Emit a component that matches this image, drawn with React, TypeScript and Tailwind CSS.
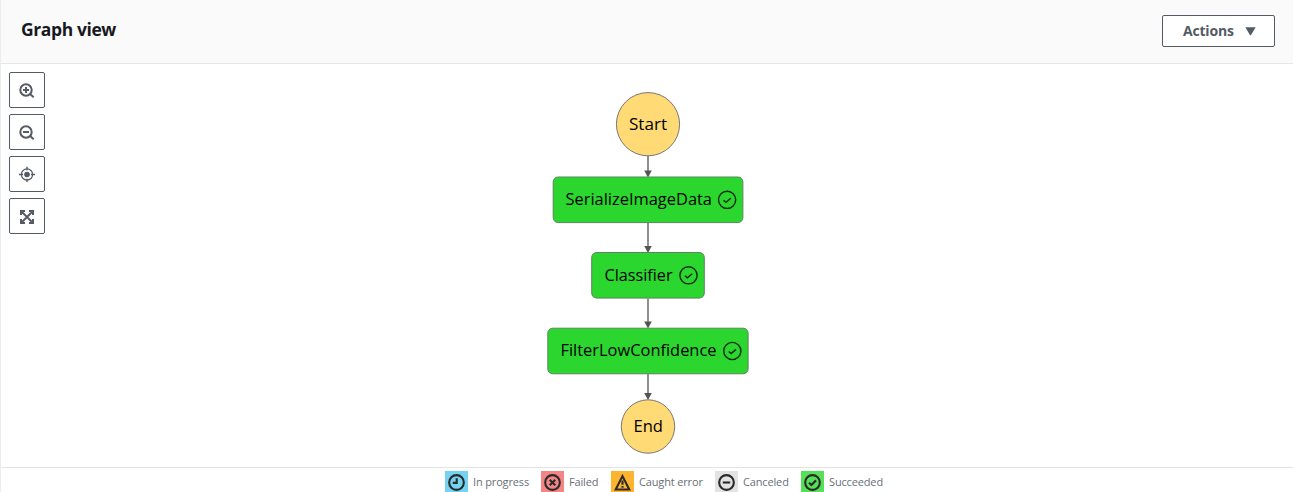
import type { ReactNode } from "react";

function ToolButton({ label, children }: { label: string; children: ReactNode }) {
  return (
    <button
      aria-label={label}
      className="flex h-9 w-9 items-center justify-center rounded-[2px] border border-[#545b64] bg-white text-[#545b64]"
    >
      <svg viewBox="0 0 16 16" className="h-4 w-4" fill="none" stroke="currentColor" strokeWidth="2">
        {children}
      </svg>
    </button>
  );
}

function LegendItem({
  label,
  width,
  color,
  children,
}: {
  label: string;
  width: string;
  color: string;
  children: ReactNode;
}) {
  return (
    <div className={`flex items-start gap-[5px] ${width}`}>
      <span className={`flex h-[22px] w-[23px] shrink-0 items-center pl-[2.5px] ${color}`}>
        <svg viewBox="0 0 16 16" className="h-[17px] w-[17px]" fill="none" stroke="#2b2b2b" strokeWidth="2">
          {children}
        </svg>
      </span>
      <span className="whitespace-nowrap leading-[22px] tracking-[-0.15px]">{label}</span>
    </div>
  );
}

const states = [
  { name: "SerializeImageData", x: 553.2, y: 177, w: 189.7, textX: 565.5, textW: 146.5, base: 205 },
  { name: "Classifier", x: 591.7, y: 252.5, w: 112.6, textX: 604.5, textW: 68, base: 281 },
  { name: "FilterLowConfidence", x: 547.8, y: 328.2, w: 200.3, textX: 560.5, textW: 156, base: 356 },
];

const edges = [
  { from: 156, to: 177.5 },
  { from: 223, to: 253 },
  { from: 298.5, to: 328.5 },
  { from: 374, to: 400 },
];

function Graph() {
  return (
    <svg
      viewBox="540 64 216 403"
      className="h-[403px] w-[216px]"
      fontSize="16"
      fill="#000"
    >
      {edges.map((e) => (
        <g key={e.from}>
          <line x1="648" x2="648" y1={e.from} y2={e.to - 5} stroke="#545454" strokeWidth="1.3" />
          <path d={`M644.2 ${e.to - 7}H651.8L648 ${e.to}Z`} fill="#545454" />
        </g>
      ))}
      <circle cx="648" cy="124.2" r="31.6" fill="#ffda75" stroke="#777" />
      <text x="629" y="130" textLength="38" lengthAdjust="spacingAndGlyphs">Start</text>
      {states.map((s) => (
        <g key={s.name}>
          <rect x={s.x} y={s.y} width={s.w} height="45.6" rx="5" fill="#2bd62e" stroke="#5b855c" />
          <text x={s.textX} y={s.base} textLength={s.textW} lengthAdjust="spacingAndGlyphs">
            {s.name}
          </text>
          <g fill="none" stroke="#062b07" strokeWidth="1.4">
            <circle cx={s.x + s.w - 15.8} cy={s.y + 22.8} r="8.6" />
            <path d={`M${s.x + s.w - 19.4} ${s.y + 23.3}l2.5 2.1l4.8 -4.2`} />
          </g>
        </g>
      ))}
      <circle cx="648" cy="426.5" r="26.7" fill="#ffda75" stroke="#777" />
      <text x="633.5" y="432" textLength="29.5" lengthAdjust="spacingAndGlyphs">End</text>
    </svg>
  );
}

export default function App() {
  return (
    <div className="flex h-[492px] w-[1293px] flex-col overflow-hidden border-l border-[#eaeded] bg-white font-['Open_Sans',sans-serif]">
      <header className="flex h-16 shrink-0 items-start justify-between border-b border-[#e7e7e7] bg-[#fafafa] pl-5 pr-[18px]">
        <h2 className="mt-[15px] text-[17.5px] font-bold leading-7 tracking-[-0.4px] text-[#16191f]">Graph view</h2>
        <button className="mt-[15px] flex h-8 w-[113px] items-center rounded-[2px] border border-[#545b64] bg-white pl-5 text-[14px] font-bold text-[#545b64]">
          <span className="w-[61.5px] -translate-y-px text-left tracking-[-0.2px]">Actions</span>
          <svg viewBox="0 0 11 9" className="h-[9px] w-[11px]" fill="currentColor">
            <path d="M.3 .3H10.7L5.9 8.3H5.1Z" />
          </svg>
        </button>
      </header>
      <main className="flex h-[403px] shrink-0">
        <div className="flex w-[539px] flex-col gap-1.5 pl-2 pt-2">
          <ToolButton label="Zoom in">
            <circle cx="7" cy="8" r="5.7" />
            <path d="M11 12L14.7 15.2M4 8h6M7 5v6" />
          </ToolButton>
          <ToolButton label="Zoom out">
            <circle cx="7" cy="8" r="5.7" />
            <path d="M11 12L14.7 15.2M4 8h6" />
          </ToolButton>
          <ToolButton label="Center">
            <circle cx="8" cy="8.5" r="5.6" strokeWidth="1.2" />
            <circle cx="8" cy="8.5" r="2.8" fill="currentColor" stroke="none" />
            <path d="M8 .7v3.5M8 12.8v3.2M0 8.5h4M12 8.5h4" strokeWidth="1.4" />
          </ToolButton>
          <ToolButton label="Fit to screen">
            <path d="M2.5 3.5L13.5 14.5M13.5 3.5L2.5 14.5" strokeWidth="1.9" />
            <path d="M2 7V3H6M10 3H14V7M14 11V15H10M6 15H2V11" strokeWidth="2" />
          </ToolButton>
        </div>
        <Graph />
      </main>
      <footer className="flex h-[25px] shrink-0 border-t border-[#e3e5e5] pl-[444px] pt-[3px] text-[11px] text-[#687078]">
        <LegendItem label="In progress" width="w-24" color="bg-[#75d3f2]">
          <circle cx="8" cy="8" r="6.9" />
          <path d="M8.2 4v4.3H4.5" />
        </LegendItem>
        <LegendItem label="Failed" width="w-[70px]" color="bg-[#f58484]">
          <circle cx="8" cy="8" r="6.9" />
          <path d="M5.4 5.4L10.6 10.6M10.6 5.4L5.4 10.6" />
        </LegendItem>
        <LegendItem label="Caught error" width="w-[104px]" color="bg-[#ffb430]">
          <path d="M8 2L14.4 14.6H1.6Z" />
          <path d="M8 6.2v4M8 11.2v1.8" />
        </LegendItem>
        <LegendItem label="Canceled" width="w-[86px]" color="bg-[#e3e3e3]">
          <circle cx="8" cy="8" r="6.9" />
          <path d="M4.5 8h7" />
        </LegendItem>
        <LegendItem label="Succeeded" width="w-[86px]" color="bg-[#55e057]">
          <circle cx="8" cy="8" r="6.9" />
          <path d="M4.7 8.2L7 10.3L11.3 6" />
        </LegendItem>
      </footer>
    </div>
  );
}
